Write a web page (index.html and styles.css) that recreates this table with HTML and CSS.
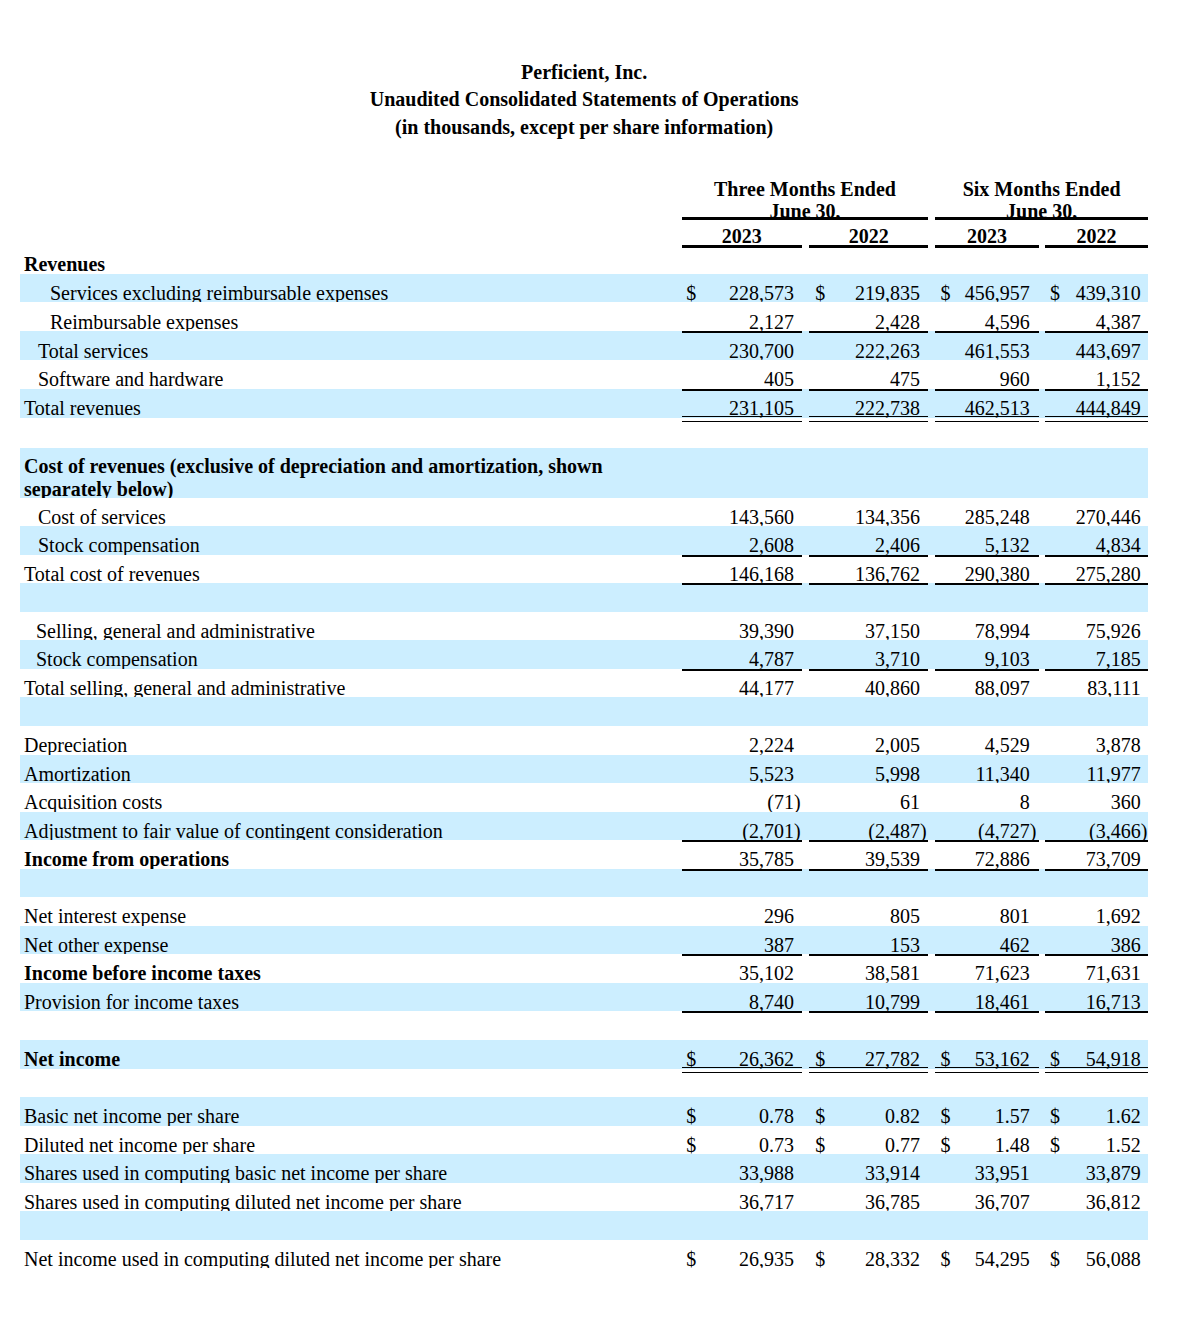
FILE: index.html
```html
<!DOCTYPE html>
<html lang="en">
<head>
<meta charset="utf-8">
<title>Perficient, Inc. - Unaudited Consolidated Statements of Operations</title>
<link rel="stylesheet" href="styles.css">
</head>
<body>
<div class="sheet">
  <div class="title">
    <div>Perficient, Inc.</div>
    <div>Unaudited Consolidated Statements of Operations</div>
    <div>(in thousands, except per share information)</div>
  </div>

  <div class="row head1">
    <div class="hg hg1">Three Months Ended<br>June 30,</div>
    <div class="hg hg2">Six Months Ended<br>June 30,</div>
  </div>
  <div class="row head2">
    <div class="hy c1">2023</div>
    <div class="hy c2">2022</div>
    <div class="hy c3">2023</div>
    <div class="hy c4">2022</div>
  </div>

  <div class="row rr">
    <div class="lab b">Revenues</div>
  </div>
  <div class="row rt blue">
    <div class="lab i2">Services excluding reimbursable expenses</div>
    <div class="g c1"><div class="gi"><span class="d">$</span><span class="n">228,573</span></div></div>
    <div class="g c2"><div class="gi"><span class="d">$</span><span class="n">219,835</span></div></div>
    <div class="g c3"><div class="gi"><span class="d">$</span><span class="n">456,957</span></div></div>
    <div class="g c4"><div class="gi"><span class="d">$</span><span class="n">439,310</span></div></div>
  </div>
  <div class="row rt">
    <div class="lab i2">Reimbursable expenses</div>
    <div class="g c1 u"><div class="gi"><span class="n">2,127</span></div></div>
    <div class="g c2 u"><div class="gi"><span class="n">2,428</span></div></div>
    <div class="g c3 u"><div class="gi"><span class="n">4,596</span></div></div>
    <div class="g c4 u"><div class="gi"><span class="n">4,387</span></div></div>
  </div>
  <div class="row rt blue">
    <div class="lab i1">Total services</div>
    <div class="g c1"><div class="gi"><span class="n">230,700</span></div></div>
    <div class="g c2"><div class="gi"><span class="n">222,263</span></div></div>
    <div class="g c3"><div class="gi"><span class="n">461,553</span></div></div>
    <div class="g c4"><div class="gi"><span class="n">443,697</span></div></div>
  </div>
  <div class="row rt">
    <div class="lab i1">Software and hardware</div>
    <div class="g c1 u"><div class="gi"><span class="n">405</span></div></div>
    <div class="g c2 u"><div class="gi"><span class="n">475</span></div></div>
    <div class="g c3 u"><div class="gi"><span class="n">960</span></div></div>
    <div class="g c4 u"><div class="gi"><span class="n">1,152</span></div></div>
  </div>
  <div class="row rt blue">
    <div class="lab">Total revenues</div>
    <div class="g c1 uu"><div class="gi"><span class="n">231,105</span></div></div>
    <div class="g c2 uu"><div class="gi"><span class="n">222,738</span></div></div>
    <div class="g c3 uu"><div class="gi"><span class="n">462,513</span></div></div>
    <div class="g c4 uu"><div class="gi"><span class="n">444,849</span></div></div>
  </div>
  <div class="row rb"></div>

  <div class="row rc blue">
    <div class="lab b two"><span class="wrap2">Cost of revenues (exclusive of depreciation and amortization, shown separately below)</span></div>
  </div>
  <div class="row">
    <div class="lab i1">Cost of services</div>
    <div class="g c1"><div class="gi"><span class="n">143,560</span></div></div>
    <div class="g c2"><div class="gi"><span class="n">134,356</span></div></div>
    <div class="g c3"><div class="gi"><span class="n">285,248</span></div></div>
    <div class="g c4"><div class="gi"><span class="n">270,446</span></div></div>
  </div>
  <div class="row blue">
    <div class="lab i1">Stock compensation</div>
    <div class="g c1 u"><div class="gi"><span class="n">2,608</span></div></div>
    <div class="g c2 u"><div class="gi"><span class="n">2,406</span></div></div>
    <div class="g c3 u"><div class="gi"><span class="n">5,132</span></div></div>
    <div class="g c4 u"><div class="gi"><span class="n">4,834</span></div></div>
  </div>
  <div class="row">
    <div class="lab">Total cost of revenues</div>
    <div class="g c1 u"><div class="gi"><span class="n">146,168</span></div></div>
    <div class="g c2 u"><div class="gi"><span class="n">136,762</span></div></div>
    <div class="g c3 u"><div class="gi"><span class="n">290,380</span></div></div>
    <div class="g c4 u"><div class="gi"><span class="n">275,280</span></div></div>
  </div>
  <div class="row blue"></div>

  <div class="row">
    <div class="lab i1b">Selling, general and administrative</div>
    <div class="g c1"><div class="gi"><span class="n">39,390</span></div></div>
    <div class="g c2"><div class="gi"><span class="n">37,150</span></div></div>
    <div class="g c3"><div class="gi"><span class="n">78,994</span></div></div>
    <div class="g c4"><div class="gi"><span class="n">75,926</span></div></div>
  </div>
  <div class="row blue">
    <div class="lab i1b">Stock compensation</div>
    <div class="g c1 u"><div class="gi"><span class="n">4,787</span></div></div>
    <div class="g c2 u"><div class="gi"><span class="n">3,710</span></div></div>
    <div class="g c3 u"><div class="gi"><span class="n">9,103</span></div></div>
    <div class="g c4 u"><div class="gi"><span class="n">7,185</span></div></div>
  </div>
  <div class="row">
    <div class="lab">Total selling, general and administrative</div>
    <div class="g c1"><div class="gi"><span class="n">44,177</span></div></div>
    <div class="g c2"><div class="gi"><span class="n">40,860</span></div></div>
    <div class="g c3"><div class="gi"><span class="n">88,097</span></div></div>
    <div class="g c4"><div class="gi"><span class="n">83,111</span></div></div>
  </div>
  <div class="row blue"></div>

  <div class="row">
    <div class="lab">Depreciation</div>
    <div class="g c1"><div class="gi"><span class="n">2,224</span></div></div>
    <div class="g c2"><div class="gi"><span class="n">2,005</span></div></div>
    <div class="g c3"><div class="gi"><span class="n">4,529</span></div></div>
    <div class="g c4"><div class="gi"><span class="n">3,878</span></div></div>
  </div>
  <div class="row blue">
    <div class="lab">Amortization</div>
    <div class="g c1"><div class="gi"><span class="n">5,523</span></div></div>
    <div class="g c2"><div class="gi"><span class="n">5,998</span></div></div>
    <div class="g c3"><div class="gi"><span class="n">11,340</span></div></div>
    <div class="g c4"><div class="gi"><span class="n">11,977</span></div></div>
  </div>
  <div class="row">
    <div class="lab">Acquisition costs</div>
    <div class="g c1"><div class="gi"><span class="n">(71<span class="rp">)</span></span></div></div>
    <div class="g c2"><div class="gi"><span class="n">61</span></div></div>
    <div class="g c3"><div class="gi"><span class="n">8</span></div></div>
    <div class="g c4"><div class="gi"><span class="n">360</span></div></div>
  </div>
  <div class="row blue">
    <div class="lab">Adjustment to fair value of contingent consideration</div>
    <div class="g c1 u"><div class="gi"><span class="n">(2,701<span class="rp">)</span></span></div></div>
    <div class="g c2 u"><div class="gi"><span class="n">(2,487<span class="rp">)</span></span></div></div>
    <div class="g c3 u"><div class="gi"><span class="n">(4,727<span class="rp">)</span></span></div></div>
    <div class="g c4 u"><div class="gi"><span class="n">(3,466<span class="rp">)</span></span></div></div>
  </div>
  <div class="row">
    <div class="lab b">Income from operations</div>
    <div class="g c1 u"><div class="gi"><span class="n">35,785</span></div></div>
    <div class="g c2 u"><div class="gi"><span class="n">39,539</span></div></div>
    <div class="g c3 u"><div class="gi"><span class="n">72,886</span></div></div>
    <div class="g c4 u"><div class="gi"><span class="n">73,709</span></div></div>
  </div>
  <div class="row blue"></div>

  <div class="row">
    <div class="lab">Net interest expense</div>
    <div class="g c1"><div class="gi"><span class="n">296</span></div></div>
    <div class="g c2"><div class="gi"><span class="n">805</span></div></div>
    <div class="g c3"><div class="gi"><span class="n">801</span></div></div>
    <div class="g c4"><div class="gi"><span class="n">1,692</span></div></div>
  </div>
  <div class="row blue">
    <div class="lab">Net other expense</div>
    <div class="g c1 u"><div class="gi"><span class="n">387</span></div></div>
    <div class="g c2 u"><div class="gi"><span class="n">153</span></div></div>
    <div class="g c3 u"><div class="gi"><span class="n">462</span></div></div>
    <div class="g c4 u"><div class="gi"><span class="n">386</span></div></div>
  </div>
  <div class="row">
    <div class="lab b">Income before income taxes</div>
    <div class="g c1"><div class="gi"><span class="n">35,102</span></div></div>
    <div class="g c2"><div class="gi"><span class="n">38,581</span></div></div>
    <div class="g c3"><div class="gi"><span class="n">71,623</span></div></div>
    <div class="g c4"><div class="gi"><span class="n">71,631</span></div></div>
  </div>
  <div class="row blue">
    <div class="lab">Provision for income taxes</div>
    <div class="g c1 u"><div class="gi"><span class="n">8,740</span></div></div>
    <div class="g c2 u"><div class="gi"><span class="n">10,799</span></div></div>
    <div class="g c3 u"><div class="gi"><span class="n">18,461</span></div></div>
    <div class="g c4 u"><div class="gi"><span class="n">16,713</span></div></div>
  </div>
  <div class="row"></div>

  <div class="row blue">
    <div class="lab b">Net income</div>
    <div class="g c1 uu2"><div class="gi"><span class="d">$</span><span class="n">26,362</span></div></div>
    <div class="g c2 uu2"><div class="gi"><span class="d">$</span><span class="n">27,782</span></div></div>
    <div class="g c3 uu2"><div class="gi"><span class="d">$</span><span class="n">53,162</span></div></div>
    <div class="g c4 uu2"><div class="gi"><span class="d">$</span><span class="n">54,918</span></div></div>
  </div>
  <div class="row"></div>

  <div class="row blue">
    <div class="lab">Basic net income per share</div>
    <div class="g c1"><div class="gi"><span class="d">$</span><span class="n">0.78</span></div></div>
    <div class="g c2"><div class="gi"><span class="d">$</span><span class="n">0.82</span></div></div>
    <div class="g c3"><div class="gi"><span class="d">$</span><span class="n">1.57</span></div></div>
    <div class="g c4"><div class="gi"><span class="d">$</span><span class="n">1.62</span></div></div>
  </div>
  <div class="row">
    <div class="lab">Diluted net income per share</div>
    <div class="g c1"><div class="gi"><span class="d">$</span><span class="n">0.73</span></div></div>
    <div class="g c2"><div class="gi"><span class="d">$</span><span class="n">0.77</span></div></div>
    <div class="g c3"><div class="gi"><span class="d">$</span><span class="n">1.48</span></div></div>
    <div class="g c4"><div class="gi"><span class="d">$</span><span class="n">1.52</span></div></div>
  </div>
  <div class="row blue">
    <div class="lab">Shares used in computing basic net income per share</div>
    <div class="g c1"><div class="gi"><span class="n">33,988</span></div></div>
    <div class="g c2"><div class="gi"><span class="n">33,914</span></div></div>
    <div class="g c3"><div class="gi"><span class="n">33,951</span></div></div>
    <div class="g c4"><div class="gi"><span class="n">33,879</span></div></div>
  </div>
  <div class="row">
    <div class="lab">Shares used in computing diluted net income per share</div>
    <div class="g c1"><div class="gi"><span class="n">36,717</span></div></div>
    <div class="g c2"><div class="gi"><span class="n">36,785</span></div></div>
    <div class="g c3"><div class="gi"><span class="n">36,707</span></div></div>
    <div class="g c4"><div class="gi"><span class="n">36,812</span></div></div>
  </div>
  <div class="row blue"></div>

  <div class="row">
    <div class="lab">Net income used in computing diluted net income per share</div>
    <div class="g c1"><div class="gi"><span class="d">$</span><span class="n">26,935</span></div></div>
    <div class="g c2"><div class="gi"><span class="d">$</span><span class="n">28,332</span></div></div>
    <div class="g c3"><div class="gi"><span class="d">$</span><span class="n">54,295</span></div></div>
    <div class="g c4"><div class="gi"><span class="d">$</span><span class="n">56,088</span></div></div>
  </div>
</div>
</body>
</html>
```

FILE: styles.css
```css
* { box-sizing: border-box; }

body {
  margin: 0;
  background: #fff;
  color: #000;
  font-family: "Liberation Serif", "Times New Roman", serif;
  font-size: 20px;
}

.sheet {
  width: 1128.3px;
  margin-left: 20px;
}

.title {
  padding-top: 58.8px;
  text-align: center;
  font-weight: bold;
  line-height: 27.5px;
}

.row {
  display: grid;
  grid-template-columns: 661.7px 120px 7.6px 119px 6.7px 104px 6px 103.3px;
  height: 28.55px;
}

.rt { height: 28.8px; }
.rb { height: 30.3px; }
.rc { height: 49.7px; }
.rr { height: 25.7px; }

.blue { background: #cceeff; }

/* header */
.head1 {
  margin-top: 36.95px;
  height: 41.7px;
}
.hg {
  border-bottom: 3px solid #000;
  overflow: hidden;
  text-align: center;
  font-weight: bold;
  line-height: 22px;
}
.hg1 { grid-column: 2 / 5; }
.hg2 { grid-column: 6 / 9; }

.head2 { height: 28px; }
.hy {
  border-bottom: 3px solid #000;
  display: flex;
  align-items: flex-end;
  justify-content: center;
  line-height: 17px;
  font-weight: bold;
}

/* columns */
.c1 { grid-column: 2; }
.c2 { grid-column: 4; }
.c3 { grid-column: 6; }
.c4 { grid-column: 8; }

/* labels */
.lab {
  grid-column: 1;
  overflow: hidden;
  display: flex;
  align-items: flex-end;
  line-height: 18.5px;
  padding-left: 4px;
  padding-right: 70px;
}
.lab.b { font-weight: bold; }
.lab.i1 { padding-left: 18px; }
.lab.i1b { padding-left: 16px; }
.lab.i2 { padding-left: 30px; }

.lab.two { line-height: 22.5px; }
.wrap2 { margin-bottom: -2.5px; }

/* number groups */
.g { position: relative; }
.gi {
  height: 100%;
  overflow: hidden;
  display: flex;
  align-items: flex-end;
  justify-content: space-between;
  line-height: 18.5px;
  white-space: nowrap;
}
.gi .n { margin-left: auto; }
.c1 .gi { padding: 0 7.7px 0 4.5px; }
.c2 .gi { padding: 0 8.3px 0 6px; }
.c3 .gi { padding: 0 9.3px 0 5.5px; }
.c4 .gi { padding: 0 7.6px 0 5px; }

.rp { margin-right: -6.67px; }

/* underlines */
.u::after,
.uu::after,
.uu2::after {
  content: "";
  position: absolute;
  left: 0;
  right: 0;
}
.u::after {
  bottom: -2px;
  height: 2px;
  background: #000;
}
.uu::after {
  bottom: -4px;
  height: 4px;
  border-top: 1.5px solid #000;
  border-bottom: 1.5px solid #000;
}
.uu2::after {
  bottom: -4.5px;
  height: 4.5px;
  border-top: 1.5px solid #000;
  border-bottom: 1.5px solid #000;
}
```
